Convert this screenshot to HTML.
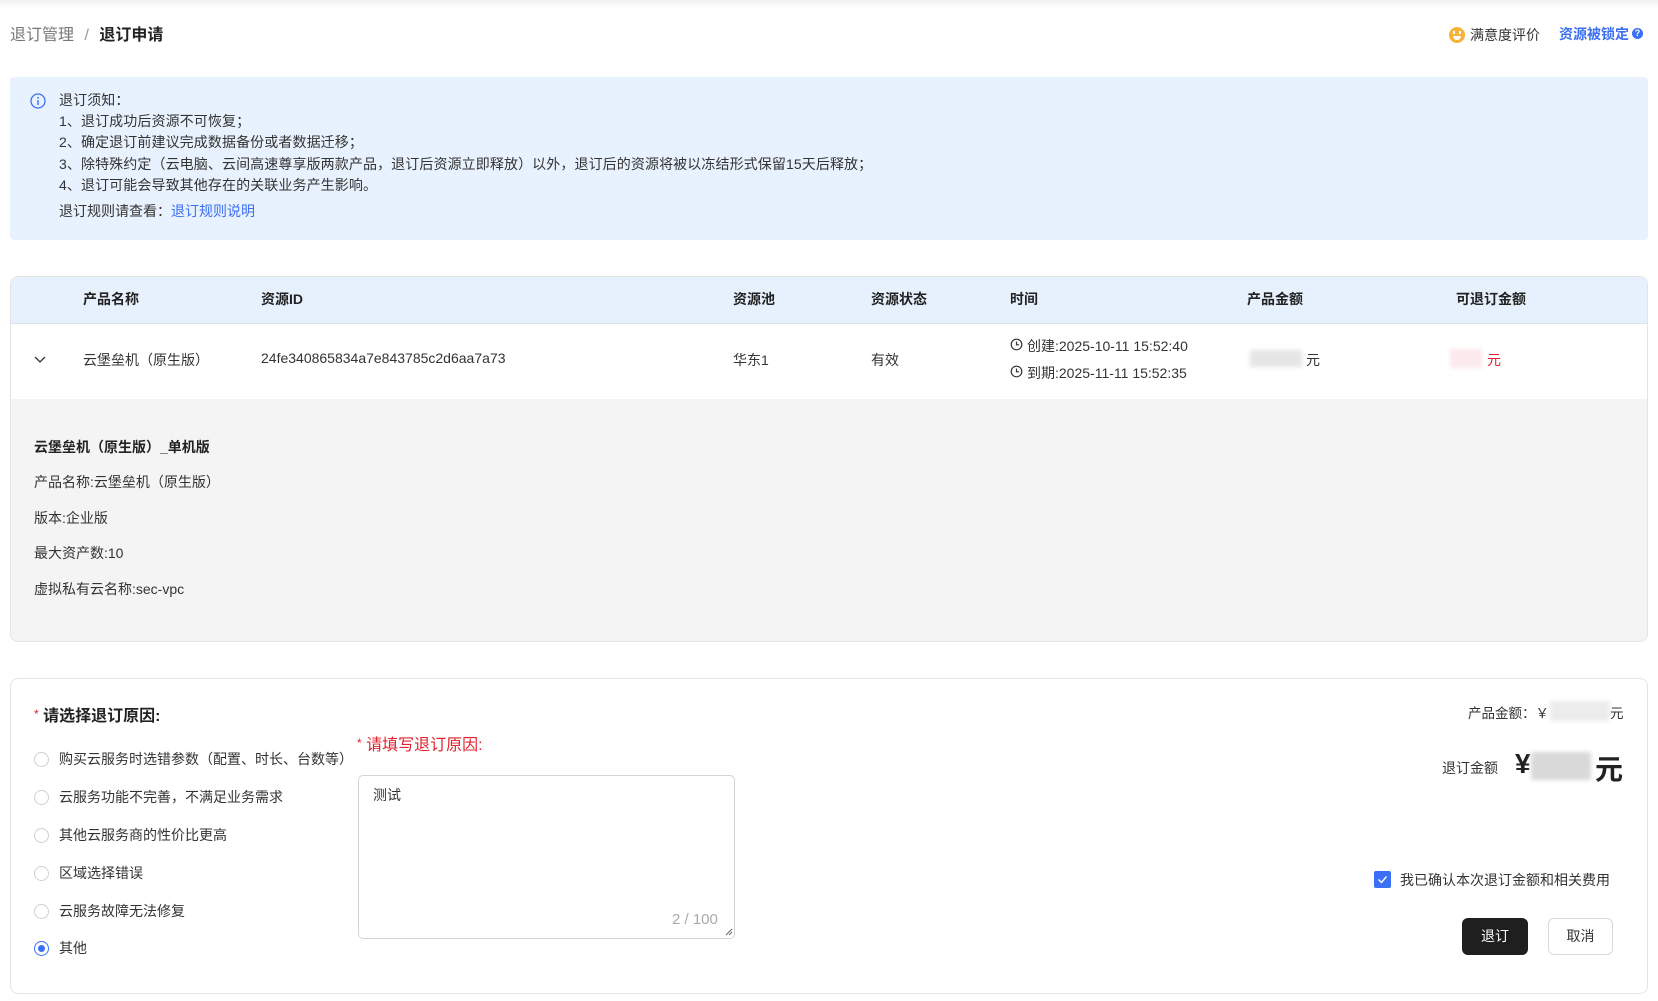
<!DOCTYPE html>
<html><head><meta charset="utf-8"><style>
*{margin:0;padding:0;box-sizing:border-box}
body{width:1658px;height:1001px;background:#fff;font-family:"Liberation Sans","Noto Sans CJK SC",sans-serif;color:#333;position:relative;overflow:hidden;font-size:14px}
.a{position:absolute;white-space:nowrap}
.topsh{position:absolute;left:0;top:0;width:1658px;height:8px;background:linear-gradient(#f0f0f0,#fff)}
.info{position:absolute;left:10px;top:77px;width:1638px;height:163px;background:#e8f2fe;border-radius:4px}
.card{position:absolute;left:10px;width:1638px;border:1px solid #e4e4e4;border-radius:8px;overflow:hidden;background:#fff}
.th{font-weight:bold;color:#222;font-size:14px}
.blur{position:absolute;background:#e6e6e6;filter:blur(2px)}
.radio{position:absolute;left:34px;width:15px;height:15px;border:1px solid #d0d0d0;border-radius:50%;background:#fff}
.rt{position:absolute;left:59px;font-size:14px;color:#333;white-space:nowrap}
</style></head><body>
<div class="topsh"></div>
<div class="a" style="left:10px;top:21px;font-size:16px;color:#777">退订管理 <span style="margin:0 6px;color:#999">/</span> <b style="color:#222">退订申请</b></div>
<div class="a" style="left:1449px;top:27px;width:16px;height:16px;border-radius:50%;background:#f6b33a"></div>
<div class="a" style="left:1453px;top:31px;width:2px;height:3px;background:#fff"></div>
<div class="a" style="left:1459px;top:31px;width:2px;height:3px;background:#fff"></div>
<div class="a" style="left:1453px;top:36px;width:8px;height:4px;border-radius:0 0 4px 4px;background:#fff"></div>
<div class="a" style="left:1470px;top:25px;font-size:14px;color:#333">满意度评价</div>
<div class="a" style="left:1559px;top:24px;font-size:14px;color:#3b6ff5;font-weight:bold">资源被锁定</div>
<div class="a" style="left:1632px;top:28px;width:11px;height:11px;border-radius:50%;background:#3b6ff5;color:#fff;font-size:9px;text-align:center;line-height:11px;font-weight:bold">?</div>

<div class="info"></div>
<svg class="a" style="left:30px;top:93px" width="16" height="16" viewBox="0 0 16 16"><circle cx="8" cy="8" r="7" fill="none" stroke="#3b6ff5" stroke-width="1.3"/><circle cx="8" cy="4.8" r="0.9" fill="#3b6ff5"/><path d="M8 7v5" stroke="#3b6ff5" stroke-width="1.4"/></svg>
<div class="a" style="left:59px;top:90px;font-size:14px;letter-spacing:0.1px;line-height:21.2px;color:#333">退订须知：<br>1、退订成功后资源不可恢复；<br>2、确定退订前建议完成数据备份或者数据迁移；<br>3、除特殊约定（云电脑、云间高速尊享版两款产品，退订后资源立即释放）以外，退订后的资源将被以冻结形式保留15天后释放；<br>4、退订可能会导致其他存在的关联业务产生影响。</div>
<div class="a" style="left:59px;top:201px;font-size:14px;color:#333">退订规则请查看：<span style="color:#3b6ff5">退订规则说明</span></div>

<div class="card" style="top:276px;height:366px">
 <div class="a" style="left:0;top:0;width:1638px;height:47px;background:#e7f1fd;border-bottom:1px solid #dde3ea"></div>
 <div class="a" style="left:0;top:122px;width:1638px;height:244px;background:#f4f4f4"></div>
</div>
<div class="a th" style="left:83px;top:289px">产品名称</div>
<div class="a th" style="left:261px;top:289px">资源ID</div>
<div class="a th" style="left:733px;top:289px">资源池</div>
<div class="a th" style="left:871px;top:289px">资源状态</div>
<div class="a th" style="left:1010px;top:289px">时间</div>
<div class="a th" style="left:1247px;top:289px">产品金额</div>
<div class="a th" style="left:1456px;top:289px">可退订金额</div>
<svg class="a" style="left:34px;top:354px" width="12" height="10"><path d="M1 3l5 5 5-5" fill="none" stroke="#333" stroke-width="1.3"/></svg>
<div class="a" style="left:83px;top:350px;font-size:14px">云堡垒机（原生版）</div>
<div class="a" style="left:261px;top:350px;font-size:14px">24fe340865834a7e843785c2d6aa7a73</div>
<div class="a" style="left:733px;top:350px;font-size:14px">华东1</div>
<div class="a" style="left:871px;top:350px;font-size:14px">有效</div>
<svg class="a" style="left:1010px;top:338px" width="13" height="13"><circle cx="6.5" cy="6.5" r="5.3" fill="none" stroke="#333" stroke-width="1.2"/><path d="M6.5 3.5v3.3h2.6" fill="none" stroke="#333" stroke-width="1.2"/></svg>
<div class="a" style="left:1027px;top:336px;font-size:14px">创建:2025-10-11 15:52:40</div>
<svg class="a" style="left:1010px;top:365px" width="13" height="13"><circle cx="6.5" cy="6.5" r="5.3" fill="none" stroke="#333" stroke-width="1.2"/><path d="M6.5 3.5v3.3h2.6" fill="none" stroke="#333" stroke-width="1.2"/></svg>
<div class="a" style="left:1027px;top:363px;font-size:14px">到期:2025-11-11 15:52:35</div>
<div class="blur" style="left:1250px;top:350px;width:52px;height:17px"></div>
<div class="a" style="left:1306px;top:350px;font-size:14px">元</div>
<div class="blur" style="left:1450px;top:349px;width:32px;height:19px;background:#fbe9ec"></div>
<div class="a" style="left:1487px;top:350px;font-size:14px;color:#e0212f">元</div>

<div class="a" style="left:34px;top:437px;font-size:14px;font-weight:bold;color:#222">云堡垒机（原生版）_单机版</div>
<div class="a" style="left:34px;top:472px;font-size:14px">产品名称:云堡垒机（原生版）</div>
<div class="a" style="left:34px;top:508px;font-size:14px">版本:企业版</div>
<div class="a" style="left:34px;top:543px;font-size:14px">最大资产数:10</div>
<div class="a" style="left:34px;top:579px;font-size:14px">虚拟私有云名称:sec-vpc</div>

<div class="card" style="top:678px;height:316px"></div>
<div class="a" style="left:34px;top:702px;font-size:16px;font-weight:bold;color:#222"><span style="color:#e0212f;font-size:12px;font-weight:normal;vertical-align:3px">*</span> 请选择退订原因:</div>
<div class="radio" style="top:752px"></div><div class="rt" style="top:749px">购买云服务时选错参数（配置、时长、台数等）</div>
<div class="radio" style="top:790px"></div><div class="rt" style="top:787px">云服务功能不完善，不满足业务需求</div>
<div class="radio" style="top:828px"></div><div class="rt" style="top:825px">其他云服务商的性价比更高</div>
<div class="radio" style="top:866px"></div><div class="rt" style="top:863px">区域选择错误</div>
<div class="radio" style="top:904px"></div><div class="rt" style="top:901px">云服务故障无法修复</div>
<div class="radio" style="top:941px;border-color:#3b6ff5"></div><div class="a" style="left:38px;top:945px;width:7px;height:7px;border-radius:50%;background:#3b6ff5"></div><div class="rt" style="top:938px">其他</div>
<div class="a" style="left:357px;top:731px;font-size:16px;color:#e0212f"><span style="font-size:12px;vertical-align:3px">*</span> 请填写退订原因:</div>
<div class="a" style="left:358px;top:775px;width:377px;height:164px;border:1px solid #d4d4d4;border-radius:5px"></div>
<div class="a" style="left:373px;top:785px;font-size:14px">测试</div>
<div class="a" style="left:672px;top:911px;font-size:15px;color:#aaa">2 / 100</div>
<svg class="a" style="left:725px;top:928px" width="8" height="8"><path d="M1 7L7 1M4 7L7 4" stroke="#666" stroke-width="1"/></svg>

<div class="a" style="left:1468px;top:702px;font-size:13.5px;color:#333">产品金额：￥</div>
<div class="blur" style="left:1550px;top:701px;width:60px;height:20px;background:#ececec"></div>
<div class="a" style="left:1610px;top:702px;font-size:13.5px">元</div>
<div class="a" style="left:1442px;top:758px;font-size:14px;color:#333">退订金额</div>
<div class="a" style="left:1515px;top:748px;font-size:28px;font-weight:bold;color:#222">¥</div>
<div class="blur" style="left:1531px;top:752px;width:60px;height:28px;background:#d9d9d9"></div>
<div class="a" style="left:1595px;top:748px;font-size:28px;font-weight:bold;color:#222">元</div>
<div class="a" style="left:1374px;top:871px;width:17px;height:17px;border-radius:2px;background:#3b6ff5"></div>
<svg class="a" style="left:1374px;top:871px" width="17" height="17"><path d="M4.5 8.5l3 3 5-6" fill="none" stroke="#fff" stroke-width="1.4"/></svg>
<div class="a" style="left:1400px;top:870px;font-size:14px">我已确认本次退订金额和相关费用</div>
<div class="a" style="left:1462px;top:918px;width:66px;height:37px;background:#1f1f1f;border-radius:6px;color:#fff;font-size:14px;text-align:center;line-height:37px">退订</div>
<div class="a" style="left:1548px;top:918px;width:65px;height:37px;border:1px solid #d9d9d9;border-radius:6px;color:#333;font-size:14px;text-align:center;line-height:35px">取消</div>
</body></html>
